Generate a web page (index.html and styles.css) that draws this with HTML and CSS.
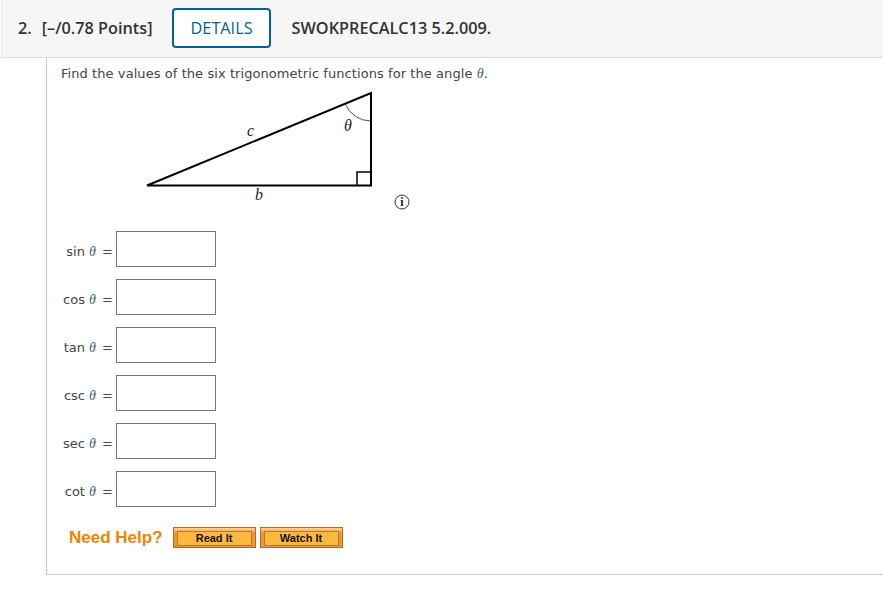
FILE: index.html
```html
<!DOCTYPE html>
<html>
  <head>
    <meta charset="UTF-8" />
    <meta name="viewport" content="width=device-width, initial-scale=1.0" />
    <title>Question 2</title>
    <link rel="stylesheet" href="styles.css">
  </head>
  <body>
    <div class="header">
      <span class="number">2.</span>
      <span class="points">[–/0.78 Points]</span>
      <button class="details">DETAILS</button>
      <span class="code">SWOKPRECALC13 5.2.009.</span>
    </div>

    <div class="question">
      <p class="prompt">Find the values of the six trigonometric functions for the angle <i class="theta">θ</i>.</p>

      <svg class="figure" width="370" height="126" viewBox="0 0 370 126">
        <path class="thick" d="M86 97.5 L310 5 V97.5 Z" />
        <path class="thin" d="M296 97 V84 H310" />
        <path class="arc" d="M284 15.5 A28 28 0 0 0 310 33" />
        <text x="186" y="48">c</text>
        <text x="283" y="43">θ</text>
        <text x="194" y="112">b</text>
        <circle class="info" cx="341" cy="114" r="7" />
        <text class="info-i" x="341" y="118">i</text>
      </svg>

      <div class="answers">
        <div class="answer"><label>sin <i class="theta">θ</i> =</label><input type="text" /></div>
        <div class="answer"><label>cos <i class="theta">θ</i> =</label><input type="text" /></div>
        <div class="answer"><label>tan <i class="theta">θ</i> =</label><input type="text" /></div>
        <div class="answer"><label>csc <i class="theta">θ</i> =</label><input type="text" /></div>
        <div class="answer"><label>sec <i class="theta">θ</i> =</label><input type="text" /></div>
        <div class="answer"><label>cot <i class="theta">θ</i> =</label><input type="text" /></div>
      </div>

      <div class="help">
        <span class="help-title">Need Help?</span>
        <button class="help-button"><span>Read It</span></button>
        <button class="help-button"><span>Watch It</span></button>
      </div>
    </div>
  </body>
</html>
```

FILE: styles.css
```css
body {
  margin: 0;
  padding: 0;
  background-color: #fff;
  color: #444;
  font-family: "DejaVu Sans", sans-serif;
  font-size: 13px;
}

.header {
  display: flex;
  align-items: center;
  height: 56px;
  padding-bottom: 1px;
  margin-left: 1px;
  background-color: #f6f6f6;
  border-bottom: 1px solid #dcdcdc;
  border-left: 1px solid #e8e8e8;
  font-family: "Open Sans", sans-serif;
  font-size: 16.25px;
  font-weight: 600;
  color: #333;
}

.number {
  margin-left: 16px;
  margin-right: 10px;
}

.details {
  width: 99px;
  height: 40px;
  margin-left: 19px;
  margin-right: 21px;
  padding: 0 0 0 1px;
  border: 2px solid #006298;
  border-radius: 4px;
  background-color: #fff;
  color: #006298;
  font-family: "Open Sans", sans-serif;
  font-size: 16.25px;
}

.question {
  height: 516px;
  margin-left: 46px;
  border-left: 1px solid #c8c8c8;
  border-bottom: 1px solid #c8c8c8;
}

.prompt {
  margin: 0;
  padding: 8px 0 0 14px;
  line-height: 16px;
  letter-spacing: 0.07px;
}

.theta {
  font-family: "Liberation Serif", serif;
  font-size: 14px;
  color: #3a5a7a;
}

.figure {
  display: block;
  margin-top: 6px;
  margin-left: 14px;
}

.figure text {
  font-family: "Liberation Serif", serif;
  font-style: italic;
  font-size: 16px;
  fill: #222;
}

.figure .thick {
  fill: none;
  stroke: #000;
  stroke-width: 2;
}

.figure .thin {
  fill: none;
  stroke: #000;
  stroke-width: 1.5;
}

.figure .arc {
  fill: none;
  stroke: #222;
  stroke-width: 0.8;
}

.figure .info {
  fill: none;
  stroke: #333;
  stroke-width: 1;
}

.figure .info-i {
  font-style: normal;
  font-weight: bold;
  font-size: 12px;
  text-anchor: middle;
}

.answers {
  display: flex;
  flex-direction: column;
  gap: 12px;
  margin-top: 17px;
}

.answer {
  display: flex;
  align-items: center;
}

.answer label {
  width: 66px;
  margin-right: 3px;
  padding-top: 6px;
  text-align: right;
  white-space: nowrap;
}

.answer label .theta {
  margin-right: 2px;
}

.answer input {
  width: 100px;
  height: 36px;
  margin: 0;
  padding: 0;
  box-sizing: border-box;
  border: 1px solid #767676;
  background-color: #fff;
}

.help {
  display: flex;
  align-items: center;
  margin-top: 20px;
  margin-left: 22px;
}

.help-title {
  margin-right: 10px;
  color: #f08300;
  font-family: "Liberation Sans", sans-serif;
  font-size: 17px;
  font-weight: bold;
}

.help-button {
  display: flex;
  width: 83px;
  height: 21px;
  margin-right: 4px;
  padding: 3px;
  box-sizing: border-box;
  border: 1px solid #a86f2c;
  background: linear-gradient(#fbd7a0, #f4952b 5px);
  color: #111;
  font-family: "Liberation Sans", sans-serif;
  font-size: 11px;
  font-weight: bold;
}

.help-button span {
  flex: 1;
  height: 13px;
  line-height: 13px;
  border: 1px solid #b5782f;
  background-color: #fdb83f;
}
```
